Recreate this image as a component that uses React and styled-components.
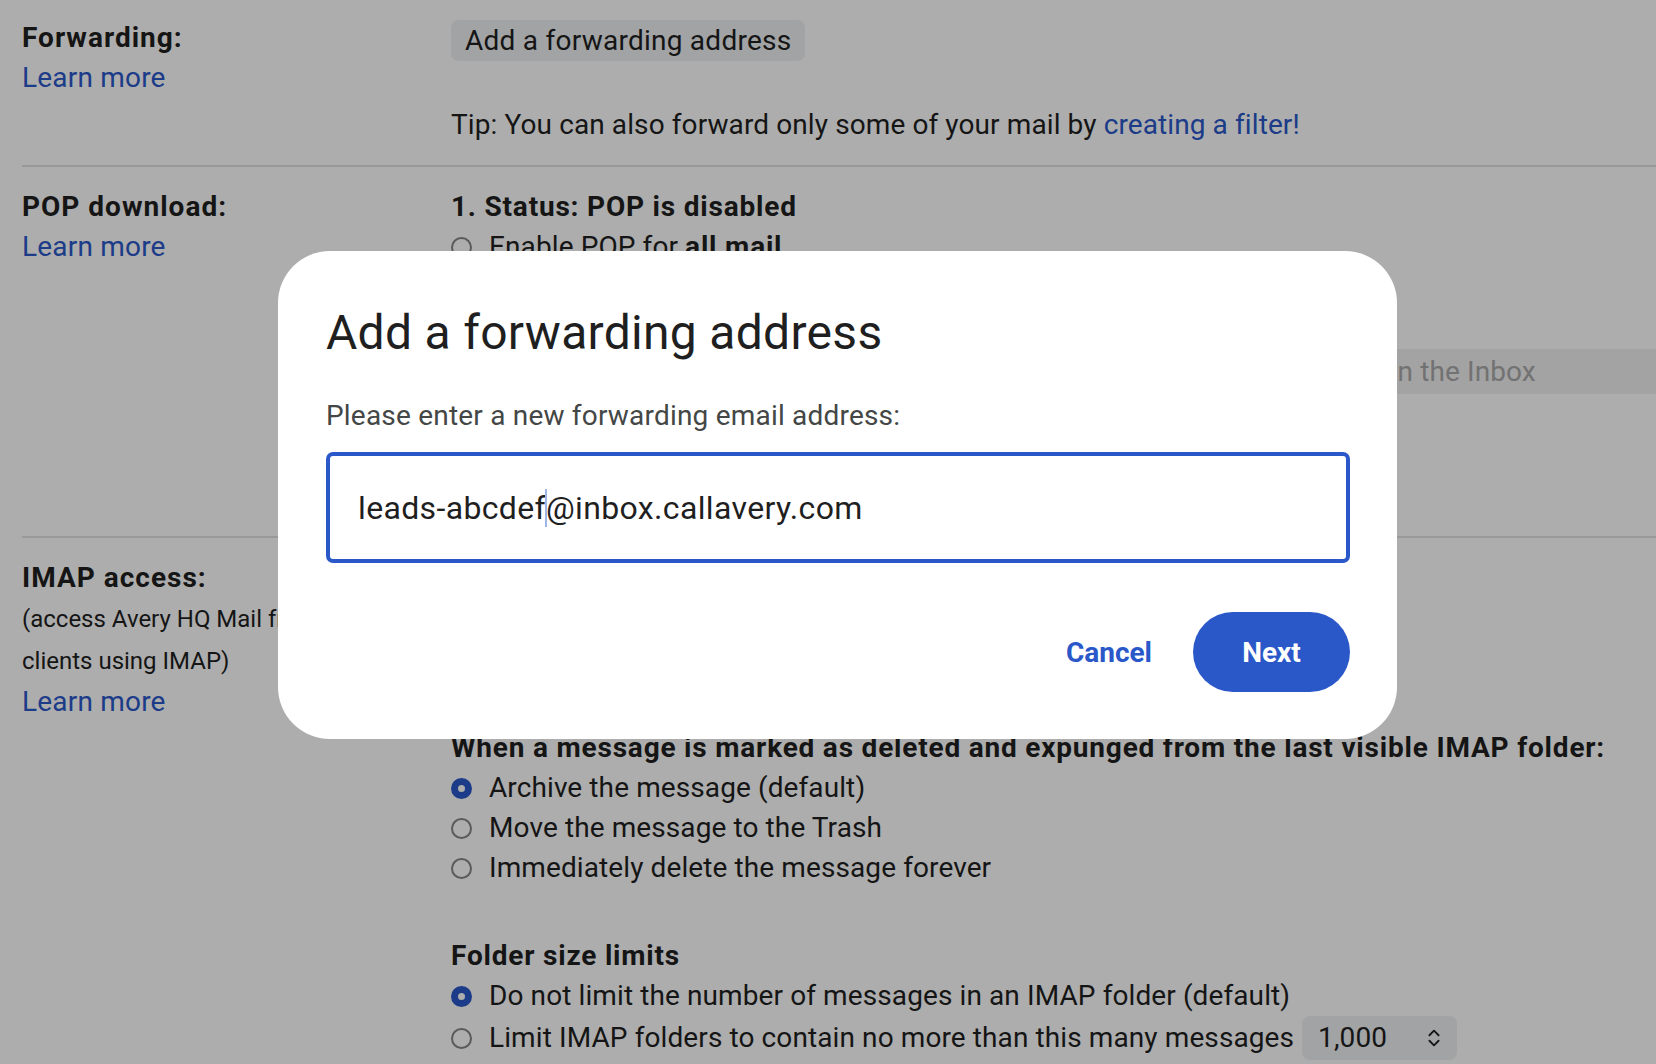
import React from 'react'
import styled, { createGlobalStyle } from 'styled-components'
import { ChevronsUpDown } from 'lucide-react'

const BLUE = '#2a58c9'

const GlobalStyle = createGlobalStyle`
  html, body {
    margin: 0;
    padding: 0;
    background: #ffffff;
    overflow: hidden;
  }
  body {
    font-family: Roboto, 'Liberation Sans', sans-serif;
    color: #1f1f1f;
  }
  * {
    box-sizing: border-box;
  }
`

function Radio({ checked }) {
  return <RadioDot $checked={checked} />
}

function App() {
  return (
    <>
      <GlobalStyle />
      <Page>
        <Section>
          <LabelCol>
            <LabelTitle>Forwarding:</LabelTitle>
            <LearnMore href="#">Learn more</LearnMore>
          </LabelCol>
          <ContentCol>
            <GreyButton>Add a forwarding address</GreyButton>
            <Tip>
              Tip: You can also forward only some of your mail by{' '}
              <InlineLink href="#">creating a filter!</InlineLink>
            </Tip>
          </ContentCol>
        </Section>

        <Section>
          <LabelCol>
            <LabelTitle>POP download:</LabelTitle>
            <LearnMore href="#">Learn more</LearnMore>
          </LabelCol>
          <ContentCol>
            <Heading>1. Status: POP is disabled</Heading>
            <OptionRow>
              <Radio />
              <span>
                Enable POP for <b>all mail</b>
              </span>
            </OptionRow>
            <OptionRow>
              <Radio />
              <span>
                Enable POP for <b>mail that arrives from now on</b>
              </span>
            </OptionRow>
            <SelectLine>
              <SelectLabel>2. When messages are accessed with POP</SelectLabel>
              <WideSelect>keep Avery HQ Mail's copy in the Inbox</WideSelect>
            </SelectLine>
            <Heading $top={42}>3. Configure your email client</Heading>
            <InlineLink href="#">Configuration instructions</InlineLink>
          </ContentCol>
        </Section>

        <Section $last>
          <LabelCol>
            <LabelTitle>IMAP access:</LabelTitle>
            <Hint>
              (access Avery HQ Mail from other
              <br />
              clients using IMAP)
            </Hint>
            <LearnMore href="#">Learn more</LearnMore>
          </LabelCol>
          <ContentCol>
            <Heading>Status: IMAP is enabled</Heading>
            <OptionRow>
              <Radio checked />
              <span>Enable IMAP</span>
            </OptionRow>
            <OptionRow>
              <Radio />
              <span>Disable IMAP</span>
            </OptionRow>
            <Heading $top={50}>
              When a message is marked as deleted and expunged from the last visible IMAP folder:
            </Heading>
            <OptionRow>
              <Radio checked />
              <span>Archive the message (default)</span>
            </OptionRow>
            <OptionRow>
              <Radio />
              <span>Move the message to the Trash</span>
            </OptionRow>
            <OptionRow>
              <Radio />
              <span>Immediately delete the message forever</span>
            </OptionRow>
            <Heading $top={48}>Folder size limits</Heading>
            <OptionRow>
              <Radio checked />
              <span>Do not limit the number of messages in an IMAP folder (default)</span>
            </OptionRow>
            <OptionRow $tall>
              <Radio />
              <span>Limit IMAP folders to contain no more than this many messages</span>
              <SmallSelect>
                <span>1,000</span>
                <ChevronsUpDown size={22} strokeWidth={2} />
              </SmallSelect>
            </OptionRow>
          </ContentCol>
        </Section>
      </Page>

      <Scrim>
        <Dialog role="dialog" aria-modal="true">
          <DialogTitle>Add a forwarding address</DialogTitle>
          <DialogText>Please enter a new forwarding email address:</DialogText>
          <FieldBox>
            leads-abcdef
            <Caret />
            @inbox.callavery.com
          </FieldBox>
          <Actions>
            <TextButton>Cancel</TextButton>
            <FilledButton>Next</FilledButton>
          </Actions>
        </Dialog>
      </Scrim>
    </>
  )
}

const Page = styled.div`
  padding-left: 22px;
  width: 1656px;
`

const Section = styled.div`
  display: grid;
  grid-template-columns: 429px 1fr;
  padding: 20px 0 ${(p) => (p.$last ? '0' : '20px')};
  border-bottom: ${(p) => (p.$last ? 'none' : '2px solid #e2e2e2')};
  &:first-child {
    padding-top: 18px;
  }
`

const LabelCol = styled.div`
  display: flex;
  flex-direction: column;
  align-items: flex-start;
`

const LabelTitle = styled.div`
  font-size: 28px;
  line-height: 40px;
  font-weight: 700;
  letter-spacing: 1px;
  color: #1f1f1f;
`

const LearnMore = styled.a`
  font-size: 28px;
  line-height: 40px;
  letter-spacing: 0.2px;
  color: ${BLUE};
  text-decoration: none;
`

const Hint = styled.div`
  font-size: 24px;
  line-height: 42px;
  color: #1f1f1f;
`

const ContentCol = styled.div`
  display: flex;
  flex-direction: column;
  align-items: flex-start;
  font-size: 28px;
  line-height: 40px;
  letter-spacing: 0.1px;
  color: #1f1f1f;
  min-width: 0;
`

const GreyButton = styled.button`
  font-family: inherit;
  font-size: 28px;
  line-height: 41px;
  letter-spacing: 0.25px;
  height: 41px;
  padding: 0 14px;
  margin-top: 2px;
  border: none;
  border-radius: 8px;
  background: #eef0f2;
  color: #1f1f1f;
`

const Tip = styled.div`
  margin-top: 44px;
  white-space: nowrap;
`

const InlineLink = styled.a`
  color: ${BLUE};
  text-decoration: none;
`

const Heading = styled.div`
  font-weight: 700;
  letter-spacing: 0.8px;
  white-space: nowrap;
  margin-top: ${(p) => p.$top || 0}px;
`

const OptionRow = styled.label`
  display: flex;
  align-items: center;
  gap: 17px;
  white-space: nowrap;
  height: ${(p) => (p.$tall ? '44px' : '40px')};
  b {
    font-weight: 700;
    letter-spacing: 0.8px;
  }
`

const RadioDot = styled.span`
  flex: none;
  width: 21px;
  height: 21px;
  border-radius: 50%;
  border: ${(p) => (p.$checked ? `7px solid ${BLUE}` : '2.5px solid #858585')};
  background: #ffffff;
`

const SelectLine = styled.div`
  display: flex;
  align-items: center;
  margin-top: 42px;
  height: 45px;
  white-space: nowrap;
`

const SelectLabel = styled.span`
  width: 588px;
  flex: none;
  font-weight: 700;
`

const WideSelect = styled.div`
  flex: none;
  width: 680px;
  height: 45px;
  line-height: 45px;
  padding-left: 16px;
  background: #f0f1f2;
  color: #a9a9a9;
`

const SmallSelect = styled.div`
  display: flex;
  align-items: center;
  justify-content: space-between;
  width: 155px;
  height: 44px;
  margin-left: -9px;
  padding: 0 12px 0 16px;
  border-radius: 8px;
  background: #eef0f2;
  color: #1f1f1f;
`

const Scrim = styled.div`
  position: fixed;
  inset: 0;
  background: rgba(0, 0, 0, 0.32);
`

const Dialog = styled.div`
  position: absolute;
  left: 278px;
  top: 251px;
  width: 1119px;
  height: 488px;
  padding: 50px 47px 47px 48px;
  background: #ffffff;
  border-radius: 52px;
  display: flex;
  flex-direction: column;
`

const DialogTitle = styled.h2`
  margin: 0;
  font-size: 48px;
  line-height: 64px;
  font-weight: 400;
  letter-spacing: 0.3px;
  color: #1f1f1f;
`

const DialogText = styled.p`
  margin: 31px 0 16px;
  font-size: 28px;
  line-height: 40px;
  letter-spacing: 0.2px;
  color: #444746;
`

const FieldBox = styled.div`
  display: flex;
  align-items: center;
  height: 111px;
  padding: 0 28px;
  border: 4px solid ${BLUE};
  border-radius: 7px;
  font-size: 32px;
  letter-spacing: 0.35px;
  color: #1f1f1f;
  white-space: pre;
`

const Caret = styled.span`
  display: inline-block;
  width: 2px;
  height: 38px;
  margin: 0 -1px;
  background: #9fb5ea;
`

const Actions = styled.div`
  display: flex;
  justify-content: flex-end;
  align-items: center;
  gap: 17px;
  margin-top: 49px;
`

const TextButton = styled.button`
  font-family: inherit;
  font-size: 28px;
  font-weight: 700;
  height: 80px;
  padding: 0 24px;
  border: none;
  border-radius: 40px;
  background: transparent;
  color: ${BLUE};
`

const FilledButton = styled.button`
  font-family: inherit;
  font-size: 28px;
  font-weight: 700;
  width: 157px;
  height: 80px;
  border: none;
  border-radius: 40px;
  background: ${BLUE};
  color: #ffffff;
`

export default App
